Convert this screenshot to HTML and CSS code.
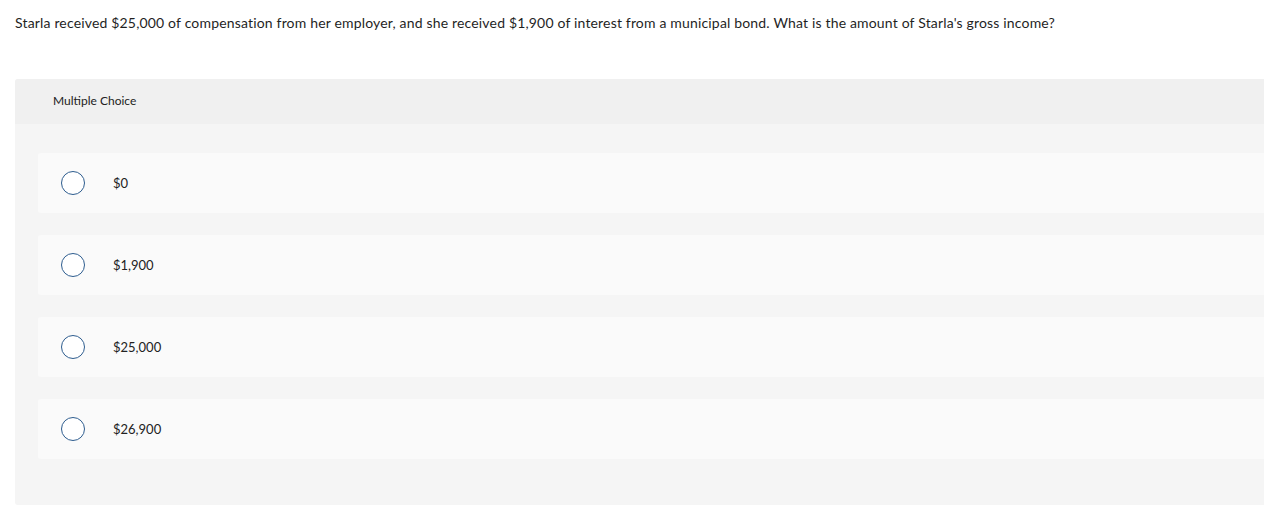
FILE: index.html
```html
<!DOCTYPE html>
<html>
<head>
<meta charset="utf-8">
<link rel="stylesheet" href="styles.css">
</head>
<body>
<div class="page">
  <p class="question">Starla received $25,000 of compensation from her employer, and she received $1,900 of interest from a municipal bond. What is the amount of Starla's gross income?</p>
  <div class="panel">
    <div class="panel-head">Multiple Choice</div>
    <div class="panel-body">
      <div class="option"><span class="radio"></span><span class="label">$0</span></div>
      <div class="option"><span class="radio"></span><span class="label">$1,900</span></div>
      <div class="option"><span class="radio"></span><span class="label">$25,000</span></div>
      <div class="option"><span class="radio"></span><span class="label">$26,900</span></div>
    </div>
  </div>
</div>
</body>
</html>
```
FILE: styles.css
```css
html, body {
  margin: 0;
  padding: 0;
  background: #fff;
  overflow: hidden;
}
body {
  font-family: Lato, "Open Sans", sans-serif;
  color: #222;
}
.page {
  padding: 13px 0 0 15px;
}
.question {
  margin: 0;
  font-size: 14px;
  line-height: 20px;
  letter-spacing: 0.17px;
  color: #1f1f1f;
}
.panel {
  margin-top: 46px;
  width: 1280px;
  border-radius: 3px;
  overflow: hidden;
  background: #f5f5f5;
}
.panel-head {
  height: 45px;
  background: #f0f0f0;
  box-sizing: border-box;
  padding-left: 38px;
  padding-bottom: 2px;
  display: flex;
  align-items: center;
  font-size: 12px;
  color: #222;
}
.panel-body {
  padding: 29px 0 46px 23px;
  display: flex;
  flex-direction: column;
  gap: 22px;
}
.option {
  height: 60px;
  background: #fafafa;
  border-radius: 3px;
  display: flex;
  align-items: center;
  padding-left: 23px;
}
.radio {
  width: 22px;
  height: 22px;
  border: 1.5px solid #2d5c8e;
  border-radius: 50%;
  background: #fff;
  flex: none;
}
.label {
  margin-left: 28px;
  font-size: 13px;
  color: #222;
}
```
